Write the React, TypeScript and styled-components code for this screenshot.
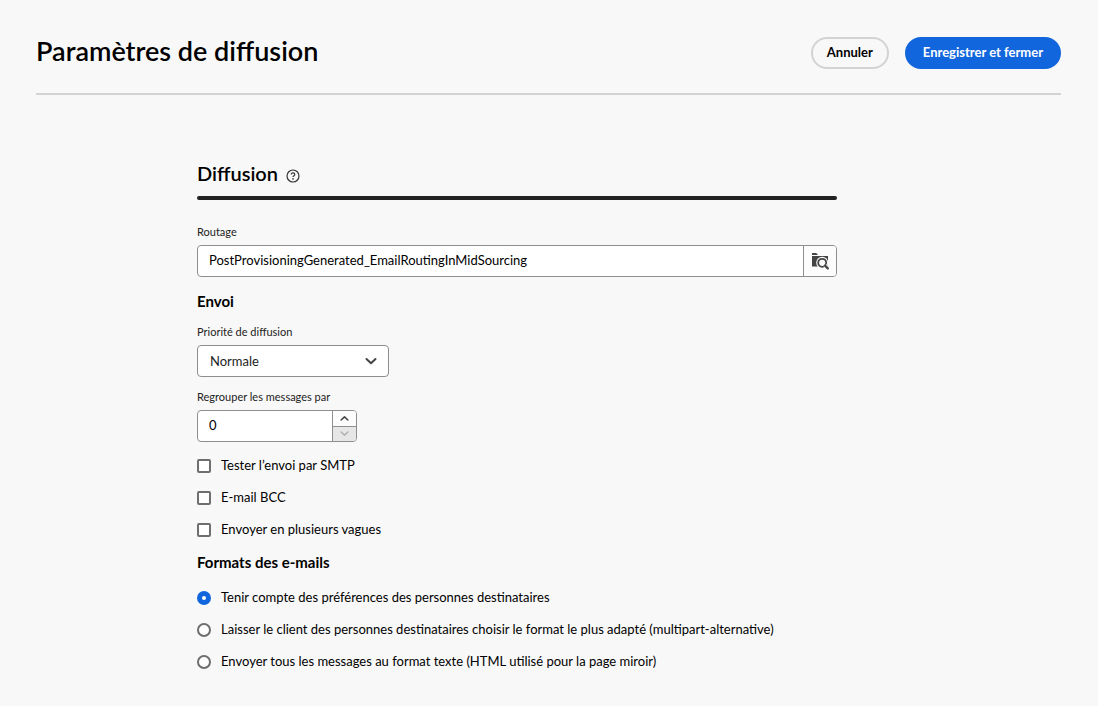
import React, { useState } from "react";
import styled, { createGlobalStyle, css } from "styled-components";

const GlobalStyle = createGlobalStyle`
  *, *::before, *::after { box-sizing: border-box; }
  body {
    margin: 0;
    background: #f8f8f8;
    color: #000;
    font-family: Lato, "Noto Sans", sans-serif;
    font-size: 13px;
    line-height: 20px;
  }
  button, input, select { font: inherit; color: inherit; }
`;

const Page = styled.div`
  padding: 36px 37px 28px 36px;
`;

const Header = styled.header`
  display: flex;
  align-items: center;
  justify-content: space-between;
  padding-bottom: 24px;
  border-bottom: 2px solid #d3d3d3;
`;

const Title = styled.h1`
  margin: 0;
  padding-bottom: 3px;
  font-size: 27px;
  font-weight: 600;
  line-height: 30px;
`;

const Actions = styled.div`
  display: flex;
  gap: 16px;
`;

const Button = styled.button<{ $primary?: boolean }>`
  height: 32px;
  padding: 0 ${(p) => (p.$primary ? "16px" : "14px")} 1px;
  border: 2px solid ${(p) => (p.$primary ? "#1266dd" : "#d3d3d3")};
  border-radius: 16px;
  background: ${(p) => (p.$primary ? "#1266dd" : "transparent")};
  color: ${(p) => (p.$primary ? "#fff" : "#000")};
  font-weight: 700;
  line-height: 20px;
  white-space: nowrap;
`;

const Form = styled.form`
  max-width: 640px;
  margin: 65px 0 0 161px;
`;

const SectionHeader = styled.div`
  display: flex;
  align-items: center;
  gap: 8px;
  padding-bottom: 8px;
`;

const SectionTitle = styled.h2`
  margin: 0;
  padding-bottom: 2px;
  font-size: 20px;
  font-weight: 600;
  line-height: 26px;
`;

const HelpButton = styled.button`
  display: flex;
  padding: 3px 0 0;
  border: 0;
  background: none;
  color: #333;
`;

const Rule = styled.div`
  height: 4px;
  margin-bottom: 21px;
  border-radius: 2px;
  background: #222;
`;

const GroupTitle = styled.h3`
  margin: 0 0 8px;
  font-size: 15px;
  font-weight: 700;
  line-height: 22px;
`;

const Label = styled.label`
  display: block;
  padding-bottom: 2px;
  color: #222;
  font-size: 11px;
  line-height: 22px;
`;

const Field = styled.div`
  padding-top: 1px;
  & + & { margin-top: 8px; }
`;

const controlFrame = css`
  height: 32px;
  border: 1px solid #8e8e8e;
  border-radius: 4px;
  background: #fff;
`;

const Picker = styled.div`
  ${controlFrame}
  display: flex;
  margin-bottom: 13px;
  overflow: hidden;
`;

const TextInput = styled.input`
  flex: 1;
  min-width: 0;
  padding: 0 11px 2px;
  border: 0;
  background: none;
`;

const PickerButton = styled.button`
  display: flex;
  align-items: center;
  justify-content: center;
  width: 33px;
  padding: 0;
  border: 0;
  border-left: 1px solid #8e8e8e;
  background: #fcfcfc;
`;

const SelectWrap = styled.div`
  ${controlFrame}
  display: grid;
  align-items: center;
  width: 192px;
  color: #222;
  & > * { grid-area: 1 / 1; }
  & > svg { justify-self: end; margin-right: 11px; color: #444; pointer-events: none; }
`;

const Select = styled.select`
  appearance: none;
  width: 100%;
  height: 30px;
  padding: 0 32px 0 12px;
  border: 0;
  background: none;
`;

const Stepper = styled.div`
  ${controlFrame}
  display: flex;
  width: 160px;
  overflow: hidden;
`;

const StepButtons = styled.div`
  display: flex;
  flex-direction: column;
  width: 24px;
  border-left: 1px solid #8e8e8e;
`;

const StepButton = styled.button`
  display: flex;
  flex: 1;
  align-items: center;
  justify-content: center;
  padding: 0;
  border: 0;
  background: #fcfcfc;
  color: #444;
  & + & { border-top: 1px solid #8e8e8e; }
  &:disabled { background: #e6e6e6; color: #b1b1b1; }
`;

const Options = styled.div`
  margin: 7px 0 6px;
`;

const Option = styled.label`
  display: flex;
  align-items: center;
  gap: 10px;
  min-height: 32px;
`;

const Checkbox = styled.input`
  appearance: none;
  flex: none;
  width: 14px;
  height: 14px;
  margin: 2px 0 0;
  border: 2px solid #6e6e6e;
  border-radius: 2px;
  background: #fff;
  &:checked { background: #1266dd; border-color: #1266dd; }
`;

const Radio = styled(Checkbox)`
  border-radius: 50%;
  &:checked { border-width: 5px; background: #fff; }
`;

const HelpIcon = () => (
  <svg width="14" height="14" viewBox="0 0 14 14" fill="none" stroke="currentColor" aria-hidden="true">
    <circle cx="7" cy="7" r="6" strokeWidth="1.2" />
    <path d="M5.2 5.4C5.3 4.4 6 3.9 7 3.9s1.8.6 1.8 1.5c0 1.3-1.8 1.4-1.8 2.7" strokeWidth="1.2" />
    <circle cx="7" cy="9.9" r=".8" fill="currentColor" stroke="none" />
  </svg>
);

const FolderSearchIcon = () => (
  <svg width="18" height="18" viewBox="0 0 18 18" aria-hidden="true">
    <path d="M1 3V1.6Q1 1 1.600 1H5.200L7 3Z" fill="#444" />
    <path d="M1 4H17V14.500H1Z" fill="#444" />
    <circle cx="11.200" cy="10.800" r="6" fill="#fcfcfc" />
    <circle cx="11.200" cy="10.800" r="4" fill="none" stroke="#444" strokeWidth="1.800" />
    <path d="M14 13.600L17 16.600" stroke="#fcfcfc" strokeWidth="4" />
    <path d="M14 13.600L16.800 16.400" stroke="#444" strokeWidth="2.200" strokeLinecap="round" />
  </svg>
);

const Chevron = ({ up, size, stroke }: { up?: boolean; size: number; stroke: number }) => (
  <svg width={size} height={size} viewBox="0 0 12 12" fill="none" aria-hidden="true">
    <path
      d={up ? "M1.500 8L6 3.800L10.500 8" : "M1.500 4L6 8.200L10.500 4"}
      stroke="currentColor"
      strokeWidth={stroke}
      strokeLinecap="round"
      strokeLinejoin="round"
    />
  </svg>
);

const deliveryOptions = ["Tester l’envoi par SMTP", "E-mail BCC", "Envoyer en plusieurs vagues"];

const formatOptions = [
  "Tenir compte des préférences des personnes destinataires",
  "Laisser le client des personnes destinataires choisir le format le plus adapté (multipart-alternative)",
  "Envoyer tous les messages au format texte (HTML utilisé pour la page miroir)",
];

export default function App() {
  const [count, setCount] = useState(0);
  const [format, setFormat] = useState(0);

  return (
    <>
      <GlobalStyle />
      <Page>
        <Header>
          <Title>Paramètres de diffusion</Title>
          <Actions>
            <Button type="button">Annuler</Button>
            <Button type="submit" form="delivery-settings" $primary>
              Enregistrer et fermer
            </Button>
          </Actions>
        </Header>

        <Form id="delivery-settings" onSubmit={(e) => e.preventDefault()}>
          <SectionHeader>
            <SectionTitle>Diffusion</SectionTitle>
            <HelpButton type="button" aria-label="Aide">
              <HelpIcon />
            </HelpButton>
          </SectionHeader>
          <Rule />

          <Label htmlFor="routing">Routage</Label>
          <Picker>
            <TextInput id="routing" defaultValue="PostProvisioningGenerated_EmailRoutingInMidSourcing" />
            <PickerButton type="button" aria-label="Parcourir">
              <FolderSearchIcon />
            </PickerButton>
          </Picker>

          <GroupTitle>Envoi</GroupTitle>
          <Field>
            <Label htmlFor="priority">Priorité de diffusion</Label>
            <SelectWrap>
              <Select id="priority" defaultValue="Normale">
                <option>Normale</option>
              </Select>
              <Chevron size={12} stroke={2} />
            </SelectWrap>
          </Field>
          <Field>
            <Label htmlFor="batch">Regrouper les messages par</Label>
            <Stepper>
              <TextInput
                id="batch"
                inputMode="numeric"
                value={count}
                onChange={(e) => setCount(Number(e.target.value) || 0)}
              />
              <StepButtons>
                <StepButton type="button" aria-label="Augmenter" onClick={() => setCount(count + 1)}>
                  <Chevron up size={9} stroke={2} />
                </StepButton>
                <StepButton
                  type="button"
                  aria-label="Diminuer"
                  disabled={count <= 0}
                  onClick={() => setCount(count - 1)}
                >
                  <Chevron size={9} stroke={2} />
                </StepButton>
              </StepButtons>
            </Stepper>
          </Field>

          <Options>
            {deliveryOptions.map((text) => (
              <Option key={text}>
                <Checkbox type="checkbox" />
                {text}
              </Option>
            ))}
          </Options>

          <GroupTitle>Formats des e-mails</GroupTitle>
          {formatOptions.map((text, i) => (
            <Option key={text}>
              <Radio type="radio" name="format" checked={format === i} onChange={() => setFormat(i)} />
              {text}
            </Option>
          ))}
        </Form>
      </Page>
    </>
  );
}
